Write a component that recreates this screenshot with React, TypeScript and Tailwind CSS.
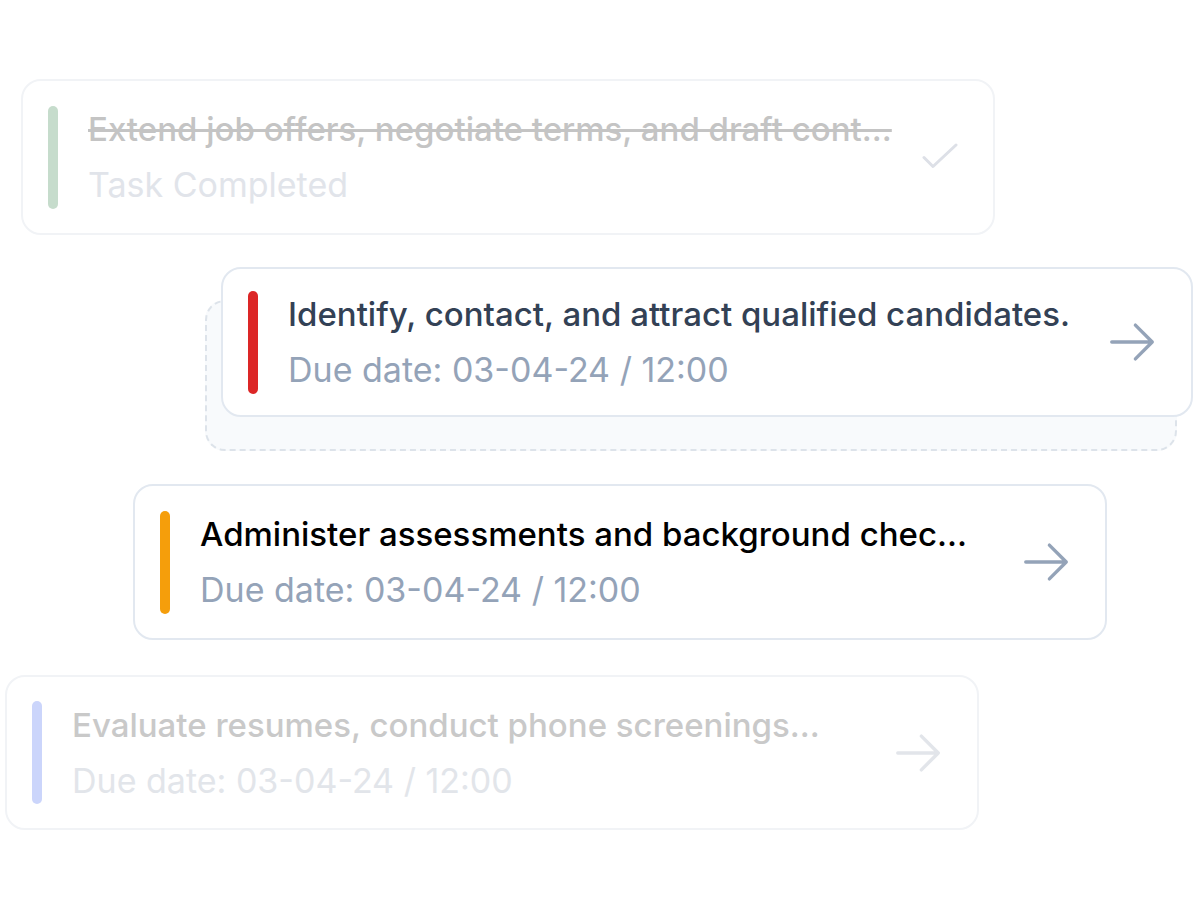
type Tone = "done" | "active" | "normal" | "muted";

interface Task {
  title: string;
  sub: string;
  bar: string;
  tone: Tone;
}

function ArrowIcon({ color }: { color: string }) {
  return (
    <svg width="54" height="54" viewBox="0 0 24 24" fill="none" className={color}>
      <path
        d="M13.5 4.5 21 12m0 0-7.5 7.5M21 12H3"
        stroke="currentColor"
        strokeWidth="1.5"
        strokeLinecap="round"
        strokeLinejoin="round"
      />
    </svg>
  );
}

function CheckIcon() {
  return (
    <svg width="36" height="28" viewBox="0 0 36 28" fill="none" className="text-[#dde0e7] ml-[12px]">
      <path
        d="M2 14.5 11 23.5 34 2"
        stroke="currentColor"
        strokeWidth="3"
        strokeLinecap="round"
        strokeLinejoin="round"
      />
    </svg>
  );
}

const toneStyles: Record<Tone, { border: string; title: string; sub: string; icon: string }> = {
  done: { border: "border-[#f1f3f6]", title: "text-[#c4c4c4] line-through", sub: "text-[#e1e4ea]", icon: "" },
  active: { border: "border-[#e2e8f0]", title: "text-[#334155]", sub: "text-[#94a3b8]", icon: "text-[#94a3b8]" },
  normal: { border: "border-[#e2e8f0]", title: "text-black", sub: "text-[#94a3b8]", icon: "text-[#94a3b8]" },
  muted: { border: "border-[#f1f3f6]", title: "text-[#c9c9c9]", sub: "text-[#e2e5ea]", icon: "text-[#e2e5ea]" },
};

function TaskCard({ task, className }: { task: Task; className?: string }) {
  const s = toneStyles[task.tone];
  return (
    <div
      className={`flex items-center bg-white border-2 rounded-[20px] w-[974px] pl-[25px] pr-[32px] ${s.border} ${className ?? ""}`}
    >
      <div className={`w-[10px] h-[103px] rounded-full shrink-0 ${task.bar}`} />
      <div className="ml-[30px] flex-1 min-w-0">
        <p className={`text-[33px] font-medium leading-[40px] whitespace-nowrap ${s.title}`}>{task.title}</p>
        <p className={`text-[34px] leading-[40px] mt-[16px] whitespace-nowrap ${s.sub}`}>{task.sub}</p>
      </div>
      <div className="shrink-0 w-[54px] flex justify-center">
        {task.tone === "done" ? <CheckIcon /> : <ArrowIcon color={s.icon} />}
      </div>
    </div>
  );
}

export default function App() {
  return (
    <div className="min-h-screen bg-white font-['Inter',sans-serif] pt-[79px]">
      <TaskCard
        className="ml-[21px] h-[156px]"
        task={{
          title: "Extend job offers, negotiate terms, and draft cont...",
          sub: "Task Completed",
          bar: "bg-[#c6dccc]",
          tone: "done",
        }}
      />

      {/* active card with drag placeholder under it */}
      <div className="relative ml-[205px] mt-[32px] pl-[16px] h-[184px]">
        <div className="absolute left-0 top-[33px] w-[972px] h-[151px] rounded-[20px] border-2 border-dashed border-[#dde3ea] bg-[#f8fafc]" />
        <TaskCard
          className="relative z-10 !w-[972px] h-[150px]"
          task={{
            title: "Identify, contact, and attract qualified candidates.",
            sub: "Due date: 03-04-24 / 12:00",
            bar: "bg-[#dc2626]",
            tone: "active",
          }}
        />
      </div>

      <TaskCard
        className="ml-[133px] mt-[33px] h-[156px]"
        task={{
          title: "Administer assessments and background chec...",
          sub: "Due date: 03-04-24 / 12:00",
          bar: "bg-[#f59e0b]",
          tone: "normal",
        }}
      />

      <TaskCard
        className="ml-[5px] mt-[35px] h-[155px]"
        task={{
          title: "Evaluate resumes, conduct phone screenings...",
          sub: "Due date: 03-04-24 / 12:00",
          bar: "bg-[#cbd5fb]",
          tone: "muted",
        }}
      />
    </div>
  );
}
